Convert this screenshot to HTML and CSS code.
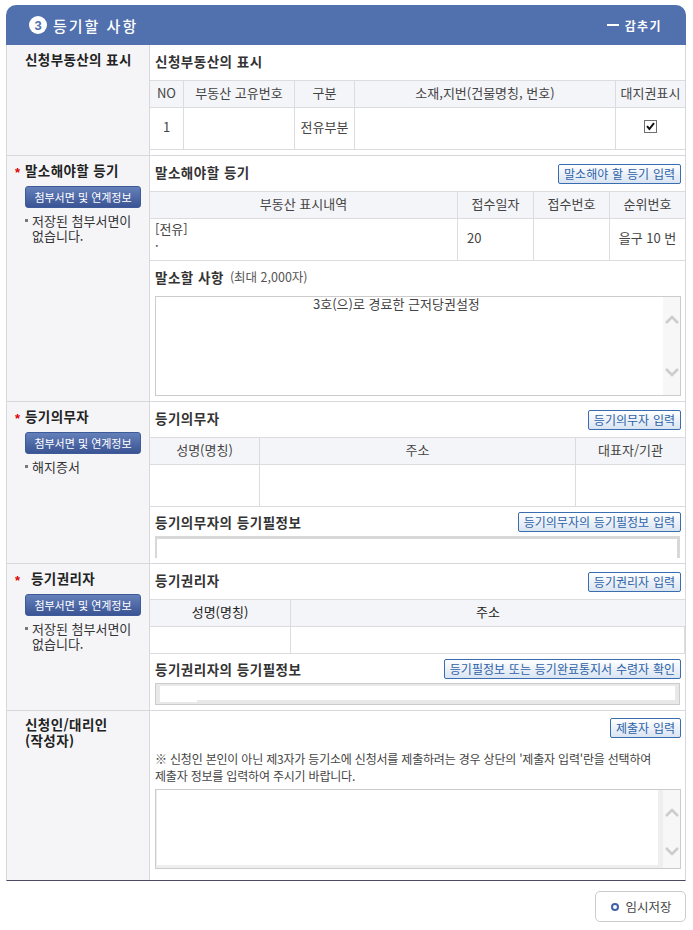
FILE: index.html
```html
<!DOCTYPE html>
<html lang="ko">
<head>
    <meta charset="UTF-8">
    <meta name="viewport" content="width=device-width, initial-scale=1.0">
    <title>등기할 사항</title>
    <link rel="stylesheet" href="styles.css">
</head>
<body>
    <div class="panel-head">
        <h2 class="panel-title"><span class="step-no">3</span>등기할 사항</h2>
        <div class="hide-toggle"><span class="minus"></span>감추기</div>
    </div>

    <div class="panel-body">
        <div class="section s1">
            <div class="side">
                <div class="side-label">신청부동산의 표시</div>
            </div>
            <div class="main">
                <div class="sub-head"><strong>신청부동산의 표시</strong></div>
                <table class="grid">
                    <colgroup>
                        <col class="c34"><col class="c111"><col class="c60"><col class="c261"><col class="c69">
                    </colgroup>
                    <thead>
                        <tr><th>NO</th><th>부동산 고유번호</th><th>구분</th><th>소재,지번(건물명칭, 번호)</th><th>대지권표시</th></tr>
                    </thead>
                    <tbody>
                        <tr>
                            <td>1</td>
                            <td></td>
                            <td>전유부분</td>
                            <td></td>
                            <td>
                                <svg class="check-box" width="13" height="13" viewBox="0 0 13 13">
                                    <rect x="0.5" y="0.5" width="12" height="12" fill="#fff" stroke="#6e6e6e"/>
                                    <path d="M3 6.2 L5.4 9 L10 3.2" fill="none" stroke="#111" stroke-width="2"/>
                                </svg>
                            </td>
                        </tr>
                    </tbody>
                </table>
            </div>
        </div>

        <div class="section s2">
            <div class="side">
                <div class="side-label"><span class="req">*</span>말소해야할 등기</div>
                <button class="btn-attach">첨부서면 및 연계정보</button>
                <p class="side-note">저장된 첨부서면이<br>없습니다.</p>
            </div>
            <div class="main">
                <div class="sub-head">
                    <strong>말소해야할 등기</strong>
                    <button class="btn-input">말소해야 할 등기 입력</button>
                </div>
                <table class="grid">
                    <colgroup>
                        <col class="c308"><col class="c76"><col class="c76"><col class="c75">
                    </colgroup>
                    <thead>
                        <tr><th>부동산 표시내역</th><th>접수일자</th><th>접수번호</th><th>순위번호</th></tr>
                    </thead>
                    <tbody>
                        <tr>
                            <td class="left top">[전유]<br>.</td>
                            <td class="left">20</td>
                            <td></td>
                            <td>을구 10 번</td>
                        </tr>
                    </tbody>
                </table>
                <div class="sub-head tall"><strong>말소할 사항</strong><span class="limit">(최대 2,000자)</span></div>
                <div class="text-box big">
                    <div class="text-box-inner cancel-text">3호(으)로 경료한 근저당권설정</div>
                    <div class="scroll">
                        <svg width="14" height="10" viewBox="0 0 14 10"><path d="M1 8 L7 2 L13 8" fill="none" stroke="#ccc" stroke-width="2.5"/></svg>
                        <svg width="14" height="10" viewBox="0 0 14 10"><path d="M1 2 L7 8 L13 2" fill="none" stroke="#ccc" stroke-width="2.5"/></svg>
                    </div>
                </div>
            </div>
        </div>

        <div class="section s3">
            <div class="side">
                <div class="side-label"><span class="req">*</span>등기의무자</div>
                <button class="btn-attach">첨부서면 및 연계정보</button>
                <p class="side-note">해지증서</p>
            </div>
            <div class="main">
                <div class="sub-head">
                    <strong>등기의무자</strong>
                    <button class="btn-input">등기의무자 입력</button>
                </div>
                <table class="grid">
                    <colgroup>
                        <col class="c110"><col class="c316"><col class="c109">
                    </colgroup>
                    <thead>
                        <tr><th>성명(명칭)</th><th>주소</th><th>대표자/기관</th></tr>
                    </thead>
                    <tbody>
                        <tr><td></td><td></td><td></td></tr>
                    </tbody>
                </table>
                <div class="sub-head short">
                    <strong>등기의무자의 등기필정보</strong>
                    <button class="btn-input">등기의무자의 등기필정보 입력</button>
                </div>
                <div class="cut-box"></div>
            </div>
        </div>

        <div class="section s4">
            <div class="side">
                <div class="side-label"><span class="req">*</span>등기권리자</div>
                <button class="btn-attach">첨부서면 및 연계정보</button>
                <p class="side-note">저장된 첨부서면이<br>없습니다.</p>
            </div>
            <div class="main">
                <div class="sub-head">
                    <strong>등기권리자</strong>
                    <button class="btn-input">등기권리자 입력</button>
                </div>
                <table class="grid dark">
                    <colgroup>
                        <col class="c141"><col class="c394">
                    </colgroup>
                    <thead>
                        <tr><th>성명(명칭)</th><th>주소</th></tr>
                    </thead>
                    <tbody>
                        <tr class="low"><td></td><td class="edge"></td></tr>
                    </tbody>
                </table>
                <div class="sub-head short">
                    <strong>등기권리자의 등기필정보</strong>
                    <button class="btn-input">등기필정보 또는 등기완료통지서 수령자 확인</button>
                </div>
                <div class="grey-box"><div class="grey-box-inner"></div></div>
            </div>
        </div>

        <div class="section s5">
            <div class="side">
                <div class="side-label">신청인/대리인<br>(작성자)</div>
            </div>
            <div class="main">
                <div class="submit-row"><button class="btn-input">제출자 입력</button></div>
                <p class="notice">※ 신청인 본인이 아닌 제3자가 등기소에 신청서를 제출하려는 경우 상단의 '제출자 입력'란을 선택하여<br>제출자 정보를 입력하여 주시기 바랍니다.</p>
                <div class="text-box small">
                    <div class="text-box-inner with-strip"></div>
                    <div class="scroll">
                        <svg width="14" height="10" viewBox="0 0 14 10"><path d="M1 8 L7 2 L13 8" fill="none" stroke="#ccc" stroke-width="2.5"/></svg>
                        <svg width="14" height="10" viewBox="0 0 14 10"><path d="M1 2 L7 8 L13 2" fill="none" stroke="#ccc" stroke-width="2.5"/></svg>
                    </div>
                </div>
            </div>
        </div>
    </div>

    <div class="page-foot">
        <button class="btn-save"><span class="ring"></span>임시저장</button>
    </div>
</body>
</html>
```

FILE: styles.css
```css
body {
    font-family: "Noto Sans CJK KR", "Noto Sans", sans-serif;
    font-size: 13px;
    color: #444;
    margin: 0;
    padding: 5px 7px 0 6px;
    background-color: #fff;
}

button {
    font-family: inherit;
    cursor: pointer;
}

/* panel header */
.panel-head {
    display: flex;
    justify-content: space-between;
    align-items: center;
    height: 40px;
    padding: 0 24px 0 23px;
    background-color: #5170ae;
    border-radius: 10px 10px 0 0;
    color: white;
}

.panel-title {
    display: flex;
    align-items: center;
    margin: 0;
    font-size: 15px;
    font-weight: 500;
    letter-spacing: 2px;
}

.step-no {
    display: flex;
    justify-content: center;
    align-items: center;
    width: 18px;
    height: 18px;
    margin-right: 6px;
    border-radius: 50%;
    background-color: white;
    color: #5170ae;
    font-family: "Liberation Sans", sans-serif;
    font-size: 13px;
    font-weight: bold;
    letter-spacing: 0;
}

.hide-toggle {
    display: flex;
    align-items: center;
    font-size: 12px;
    font-weight: bold;
    letter-spacing: 1.4px;
}

.minus {
    width: 12px;
    height: 2px;
    margin-right: 6px;
    background-color: white;
}

/* sections */
.panel-body {
    border-left: 1px solid #d8d8dc;
    border-right: 1px solid #d8d8dc;
    border-bottom: 1px solid #4a4a60;
}

.section {
    display: grid;
    grid-template-columns: 143px 535px;
    border-bottom: 1px solid #d8d8dc;
}

.section:last-child {
    border-bottom: 0;
}

.s1 { height: 110px; }
.s2 { height: 245px; }
.s3 { height: 161px; }
.s4 { height: 146px; }
.s5 { height: 169px; }

.side {
    padding: 5px 6px 0 18px;
    background-color: #f5f5f8;
    border-right: 1px solid #d8d8dc;
}

.side-label {
    position: relative;
    font-size: 13.5px;
    font-weight: bold;
    line-height: 18px;
    letter-spacing: 0.4px;
    color: #222;
}

.s5 .side-label {
    line-height: 16px;
}

.req {
    position: absolute;
    left: -10px;
    top: 3px;
    color: #e00000;
    font-family: "Liberation Sans", sans-serif;
    font-size: 13px;
}

.s4 .side-label {
    padding-left: 6px;
}

.btn-attach {
    display: block;
    width: 116px;
    height: 22px;
    margin-top: 7px;
    padding: 0;
    border: 1px solid #3f5a98;
    border-radius: 3px;
    background: linear-gradient(#6480b9, #3b5494);
    color: white;
    font-size: 11px;
}

.side-note {
    position: relative;
    margin: 5px 0 0;
    padding-left: 7px;
    font-size: 13px;
    line-height: 15px;
    color: #333;
}

.side-note::before {
    content: "";
    position: absolute;
    left: 0;
    top: 6px;
    width: 3px;
    height: 3px;
    background-color: #777;
}

/* main column */
.sub-head {
    display: flex;
    justify-content: space-between;
    align-items: center;
    height: 35px;
    padding: 0 4px 0 5px;
    box-sizing: border-box;
}

.sub-head strong {
    margin-bottom: 4px;
    font-size: 13.5px;
    letter-spacing: 0.5px;
    color: #333;
}

.sub-head.tall {
    justify-content: flex-start;
}

.sub-head.short {
    height: 29px;
}

.sub-head.short strong {
    margin-bottom: 0;
}

.limit {
    margin: 0 0 4px 6px;
    font-size: 12.5px;
    color: #555;
}

/* tables */
.grid {
    width: 535px;
    table-layout: fixed;
    border-spacing: 0;
    border-top: 1px solid #dcdcdf;
    border-bottom: 0;
}

.grid th,
.grid td {
    padding: 0 0 4px;
    text-align: center;
    font-weight: 400;
    border-right: 1px solid #dcdcdf;
    border-bottom: 1px solid #dcdcdf;
}

.grid th {
    background-color: #f4f5f8;
}

.grid th:last-child,
.grid td:last-child {
    border-right: 0;
}

.grid thead tr { height: 27px; }
.grid tbody tr { height: 42px; }
.grid tbody tr.low { height: 27px; }

.grid.dark th { color: #222; }

.grid td.edge {
    border-right: 1px solid #dcdcdf;
}

.grid td.left {
    text-align: left;
    padding-left: 5px;
    padding-right: 5px;
}

.grid td.left + td.left {
    padding-left: 9px;
}

.grid td.top {
    vertical-align: top;
    padding-top: 3px;
    line-height: 13px;
}

.c34 { width: 34px; }
.c111 { width: 111px; }
.c60 { width: 60px; }
.c261 { width: 261px; }
.c69 { width: 69px; }
.c308 { width: 308px; }
.c76 { width: 76px; }
.c75 { width: 75px; }
.c110 { width: 110px; }
.c316 { width: 316px; }
.c109 { width: 109px; }
.c141 { width: 141px; }
.c394 { width: 394px; }

.check-box {
    display: block;
    margin: 0 auto;
}

.btn-input {
    height: 20px;
    padding: 0 5px;
    border: 1px solid #3a6cb0;
    border-radius: 2px;
    background: linear-gradient(#fff, #d9e4f2);
    color: #2d62a8;
    font-size: 12px;
    line-height: 16px;
    word-spacing: 0.5px;
    white-space: nowrap;
}

/* text areas */
.text-box {
    display: flex;
    width: 526px;
    margin-left: 5px;
    border: 1px solid #ccc;
    box-sizing: border-box;
}

.text-box.big { height: 100px; }
.text-box.small { height: 80px; }

.text-box-inner {
    flex: 1;
}

.cancel-text {
    padding-left: 157px;
    line-height: 14px;
}

.with-strip {
    border-left: 1px solid #eee;
    border-bottom: 3px solid #eee;
}

.scroll {
    display: flex;
    flex-direction: column;
    justify-content: space-between;
    align-items: center;
    width: 17px;
    padding: 18px 0 18px;
    background-color: #f7f7f7;
    box-sizing: border-box;
}

.s5 .scroll {
    width: 22px;
    padding: 18px 0 12px;
    border-left: 5px solid #eee;
}

.cut-box {
    width: 525px;
    height: 22px;
    margin-left: 5px;
    border-top: 3px solid #d8d8d8;
    border-left: 2px solid #d8d8d8;
    border-right: 3px solid #d8d8d8;
    box-sizing: border-box;
}

.grey-box {
    width: 525px;
    height: 22px;
    margin-left: 5px;
    padding: 2px 4px 4px;
    border: 1px solid #ccc;
    background-color: #e8e8e8;
    box-sizing: border-box;
}

.grey-box-inner {
    height: 14px;
    background-color: white;
}

.grey-box-inner::after {
    content: "";
    display: block;
    width: 37px;
    height: 2px;
    padding-top: 14px;
    background-color: white;
}

.submit-row {
    display: flex;
    justify-content: flex-end;
    padding: 7px 4px 0 0;
}

.notice {
    margin: 12px 0 5px 5px;
    font-size: 12px;
    line-height: 17px;
    letter-spacing: -0.2px;
    color: #444;
}

/* save */
.page-foot {
    display: flex;
    justify-content: flex-end;
    margin-top: 10px;
}

.btn-save {
    display: flex;
    justify-content: center;
    align-items: center;
    width: 91px;
    height: 31px;
    padding: 0 0 0 2px;
    border: 1px solid #ccc;
    border-radius: 5px;
    background-color: white;
    color: #444;
    font-size: 12.5px;
}

.ring {
    width: 4px;
    height: 4px;
    margin-right: 6px;
    border: 2px solid #3f62a8;
    border-radius: 50%;
}
```
